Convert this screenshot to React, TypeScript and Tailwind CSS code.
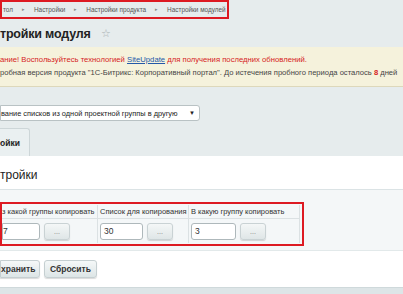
import React from "react";

const Dots = () => (
  <div className="w-[26px] h-[17px] rounded-[3px] border border-[#c9d2d4] bg-gradient-to-b from-[#f4f7f7] to-[#dfe6e7] shadow-[0_1px_1px_rgba(0,0,0,0.15)] flex items-center justify-center text-[7px] text-[#777] leading-none">
    ...
  </div>
);

export default function App() {
  return (
    <div className="w-[403px] h-[294px] overflow-hidden bg-[#e6eced] font-['Liberation_Sans',Arial,sans-serif] text-[#333] flex flex-col">
      {/* breadcrumb */}
      <div className="h-[19px] flex items-start">
        <div className="w-[229px] h-[19px] border-2 border-[#dd1a22] flex items-center gap-[9px] text-[6.4px] text-[#555] pl-[1px] whitespace-nowrap">
          <span>тол</span>
          <span className="text-[5px] text-[#888]">▸</span>
          <span>Настройки</span>
          <span className="text-[5px] text-[#888]">▸</span>
          <span>Настройки продукта</span>
          <span className="text-[5px] text-[#888]">▸</span>
          <span>Настройки модулей</span>
        </div>
      </div>
      {/* title */}
      <div className="h-[28px] flex items-center gap-[10px] pt-[2px]">
        <span className="text-[12.5px] font-bold text-[#222] leading-none tracking-[-0.2px]">тройки модуля</span>
        <span className="text-[11px] text-[#a9b1b3] leading-none">☆</span>
      </div>
      {/* notice */}
      <div className="h-[40px] bg-[#f5f2dc] border-b border-[#ddd8bb] flex flex-col justify-center gap-[3px] leading-[10px]">
        <div className="text-[#d51d1d] whitespace-nowrap text-[7.7px]">
          ание! Воспользуйтесь технологией <span className="text-[#2358a8] underline">SiteUpdate</span> для получения последних обновлений.
        </div>
        <div className="text-[#444] whitespace-nowrap text-[7.6px]">
          робная версия продукта "1С-Битрикс: Корпоративный портал". До истечения пробного периода осталось <b className="text-[#d51d1d]">8</b> дней
        </div>
      </div>
      {/* select */}
      <div className="h-[42px] flex items-center pt-[12px]">
        <div className="w-[200px] h-[16px] bg-white border border-[#b9c2c4] rounded-r-[3px] flex items-center justify-between pr-[4px] text-[7.4px] text-[#222] whitespace-nowrap overflow-hidden">
          <span>вание списков из одной проектной группы в другую</span>
          <span className="text-[6px]">▼</span>
        </div>
      </div>
      {/* tab */}
      <div className="h-[28px] flex">
        <div className="w-[30px] bg-[#eaf0f1] border-r border-t border-[#cdd6d8] rounded-tr-[3px] flex items-center text-[8.5px] font-bold text-[#222] pt-[2px]">
          ойки
        </div>
      </div>
      {/* panel */}
      <div className="flex-1 bg-white flex flex-col">
        <div className="h-[34px] flex items-center text-[12px] text-[#222] border-b border-[#dbe3e5] pt-[5px]">тройки</div>
        <div className="bg-[#f4f7f8] border-b border-[#e2e9ea] pt-[12px] pb-[4px]">
          <div className="w-[304px] h-[44px] border-2 border-[#dd1a22] pt-[1px]">
            <div className="grid grid-cols-[96px_91px_111px] text-[7.5px] text-[#333]">
              <div className="h-[14px] flex items-center border-r border-b border-[#dbe1e3] whitespace-nowrap">з какой группы копировать</div>
              <div className="h-[14px] flex items-center pl-[2px] border-r border-b border-[#dbe1e3] whitespace-nowrap">Список для копирования</div>
              <div className="h-[14px] flex items-center pl-[2px] border-r border-b border-[#dbe1e3] whitespace-nowrap">В какую группу копировать</div>
              <div className="h-[24px] flex items-center gap-[4px] border-r border-[#dbe1e3]">
                <div className="w-[38px] h-[17px] bg-white border border-[#aeb8bb] rounded-r-[3px] flex items-center text-[8.5px]">7</div>
                <Dots />
              </div>
              <div className="h-[24px] flex items-center gap-[4px] pl-[2px] border-r border-[#dbe1e3]">
                <div className="w-[43px] h-[17px] bg-white border border-[#aeb8bb] rounded-[3px] flex items-center pl-[3px] text-[8.5px]">30</div>
                <Dots />
              </div>
              <div className="h-[24px] flex items-center gap-[4px] pl-[2px] border-r border-[#dbe1e3]">
                <div className="w-[45px] h-[17px] bg-white border border-[#aeb8bb] rounded-[3px] flex items-center pl-[3px] text-[8.5px]">3</div>
                <Dots />
              </div>
            </div>
          </div>
        </div>
        <div className="h-[36px] flex items-center gap-[4px]">
          <div className="w-[40px] h-[18px] rounded-r-[3px] border border-[#c5cfd1] bg-gradient-to-b from-[#f5f8f8] to-[#dde5e6] shadow-[0_1px_1px_rgba(0,0,0,0.15)] flex items-center text-[8.5px] font-bold text-[#333]">хранить</div>
          <div className="w-[53px] h-[18px] rounded-[3px] border border-[#c5cfd1] bg-gradient-to-b from-[#f5f8f8] to-[#dde5e6] shadow-[0_1px_1px_rgba(0,0,0,0.15)] flex items-center justify-center text-[8.5px] font-bold text-[#333]">Сбросить</div>
        </div>
      </div>
      <div className="h-[7px] bg-[#dde5e7] border-t border-[#cfd9db]"></div>
    </div>
  );
}
